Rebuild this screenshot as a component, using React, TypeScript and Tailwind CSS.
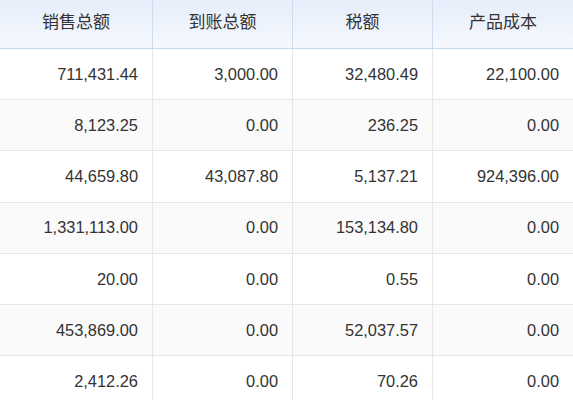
const rows = [
  ["711,431.44", "3,000.00", "32,480.49", "22,100.00"],
  ["8,123.25", "0.00", "236.25", "0.00"],
  ["44,659.80", "43,087.80", "5,137.21", "924,396.00"],
  ["1,331,113.00", "0.00", "153,134.80", "0.00"],
  ["20.00", "0.00", "0.55", "0.00"],
  ["453,869.00", "0.00", "52,037.57", "0.00"],
  ["2,412.26", "0.00", "70.26", "0.00"],
];
const heads = ["销售总额", "到账总额", "税额", "产品成本"];
const widths = ["w-[153px]", "w-[140px]", "w-[140px]", "flex-1"];
export default function App() {
  return (
    <div className="w-[573px] h-[400px] overflow-hidden bg-white text-[16.4px] text-[#333]" style={{ fontFamily: '"Liberation Sans", "Noto Sans CJK SC", sans-serif' }}>
      <div className="flex h-[49px] border-b border-[#c6d8ec] bg-gradient-to-b from-[#e6eefa] to-[#f5f8fe]">
        {heads.map((h, i) => (
          <div key={i} className={`${widths[i]} flex items-center justify-center text-[17px] pb-[2px] ${i < 3 ? "border-r border-[#cddcee]" : ""}`}>{h}</div>
        ))}
      </div>
      {rows.map((r, ri) => (
        <div key={ri} className={`flex h-[51.2px] border-b border-[#e6e6e6] ${ri % 2 ? "bg-[#fafafa]" : "bg-white"}`}>
          {r.map((c, i) => (
            <div key={i} className={`${widths[i]} flex items-center justify-end pr-[14px] ${i < 3 ? "border-r border-[#e6e6e6]" : ""}`}>{c}</div>
          ))}
        </div>
      ))}
    </div>
  );
}
